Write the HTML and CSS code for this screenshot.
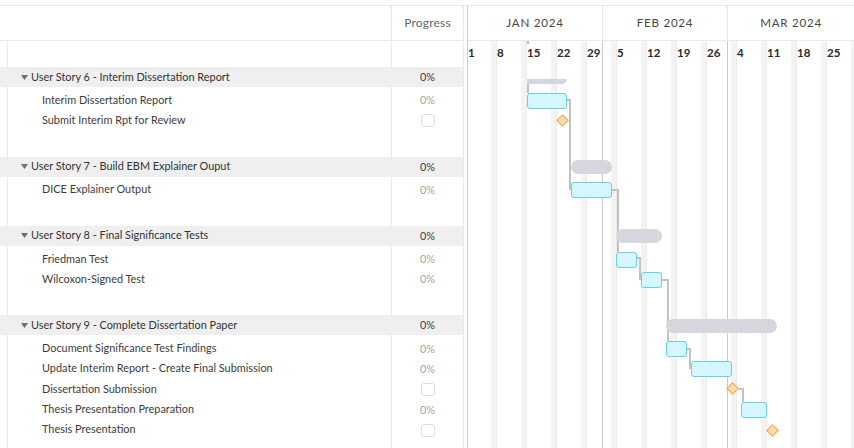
FILE: index.html
```html
<!DOCTYPE html>
<html lang="en">
<head>
<meta charset="utf-8">
<title>Gantt</title>
<link rel="stylesheet" href="styles.css">
</head>
<body>
<div class="app">
  <section class="tree">
    <div class="tree-head">
      <div class="head-name"></div>
      <div class="head-prog">Progress</div>
    </div>
    <div class="tree-body">
      <div class="block">
        <div class="row group"><div class="name"><svg class="caret" width="7" height="5" viewBox="0 0 7 5"><polygon points="0,0 7,0 3.5,5"/></svg>User Story 6 - Interim Dissertation Report</div><div class="prog">0%</div></div>
        <div class="row task"><div class="name">Interim Dissertation Report</div><div class="prog">0%</div></div>
        <div class="row task"><div class="name">Submit Interim Rpt for Review</div><div class="prog"><span class="check"></span></div></div>
      </div>
      <div class="block">
        <div class="row group"><div class="name"><svg class="caret" width="7" height="5" viewBox="0 0 7 5"><polygon points="0,0 7,0 3.5,5"/></svg>User Story 7 - Build EBM Explainer Ouput</div><div class="prog">0%</div></div>
        <div class="row task"><div class="name">DICE Explainer Output</div><div class="prog">0%</div></div>
      </div>
      <div class="block">
        <div class="row group"><div class="name"><svg class="caret" width="7" height="5" viewBox="0 0 7 5"><polygon points="0,0 7,0 3.5,5"/></svg>User Story 8 - Final Significance Tests</div><div class="prog">0%</div></div>
        <div class="row task"><div class="name">Friedman Test</div><div class="prog">0%</div></div>
        <div class="row task"><div class="name">Wilcoxon-Signed Test</div><div class="prog">0%</div></div>
      </div>
      <div class="block">
        <div class="row group"><div class="name"><svg class="caret" width="7" height="5" viewBox="0 0 7 5"><polygon points="0,0 7,0 3.5,5"/></svg>User Story 9 - Complete Dissertation Paper</div><div class="prog">0%</div></div>
        <div class="row task"><div class="name">Document Significance Test Findings</div><div class="prog">0%</div></div>
        <div class="row task"><div class="name">Update Interim Report - Create Final Submission</div><div class="prog">0%</div></div>
        <div class="row task"><div class="name">Dissertation Submission</div><div class="prog"><span class="check"></span></div></div>
        <div class="row task"><div class="name">Thesis Presentation Preparation</div><div class="prog">0%</div></div>
        <div class="row task"><div class="name">Thesis Presentation</div><div class="prog"><span class="check"></span></div></div>
      </div>
    </div>
  </section>
  <div class="splitter"></div>
  <section class="gantt">
    <div class="gantt-head">
      <div class="month jan">JAN 2024</div>
      <div class="month feb">FEB 2024</div>
      <div class="month mar">MAR 2024</div>
    </div>
    <div class="gantt-body">
      <div class="weekend" style="left:23px"></div>
      <div class="weekend" style="left:53px"></div>
      <div class="weekend" style="left:83px"></div>
      <div class="weekend" style="left:113px"></div>
      <div class="weekend" style="left:143px"></div>
      <div class="weekend" style="left:173px"></div>
      <div class="weekend" style="left:203px"></div>
      <div class="weekend" style="left:233px"></div>
      <div class="weekend" style="left:263px"></div>
      <div class="weekend" style="left:293px"></div>
      <div class="weekend" style="left:323px"></div>
      <div class="weekend" style="left:353px"></div>
      <div class="weekend" style="left:383px"></div>
      <div class="month-line" style="left:134px"></div>
      <div class="month-line" style="left:259px"></div>

      <div class="day" style="left:0px">1</div>
      <div class="day" style="left:29px">8</div>
      <div class="day" style="left:59px">15</div>
      <div class="day" style="left:89px">22</div>
      <div class="day" style="left:119px">29</div>
      <div class="day" style="left:149px">5</div>
      <div class="day" style="left:179px">12</div>
      <div class="day" style="left:209px">19</div>
      <div class="day" style="left:239px">26</div>
      <div class="day" style="left:269px">4</div>
      <div class="day" style="left:299px">11</div>
      <div class="day" style="left:329px">18</div>
      <div class="day" style="left:359px">25</div>

      <div class="link" style="left:59px;top:0;width:2px;height:3px"></div>
      <div class="link" style="left:59px;top:43px;width:2px;height:9px"></div>
      <div class="link" style="left:99px;top:58px;width:4px;height:2px"></div>
      <div class="link" style="left:101px;top:58px;width:2px;height:91px"></div>
      <div class="link" style="left:144px;top:148px;width:6px;height:2px"></div>
      <div class="link" style="left:149px;top:148px;width:2px;height:63px"></div>
      <div class="link" style="left:169px;top:216px;width:4px;height:2px"></div>
      <div class="link" style="left:171px;top:216px;width:2px;height:23px"></div>
      <div class="link" style="left:194px;top:238px;width:6px;height:2px"></div>
      <div class="link" style="left:199px;top:238px;width:2px;height:62px"></div>
      <div class="link" style="left:219px;top:307px;width:4px;height:2px"></div>
      <div class="link" style="left:221px;top:307px;width:2px;height:21px"></div>
      <div class="link" style="left:271px;top:347px;width:5px;height:2px"></div>
      <div class="link" style="left:274px;top:347px;width:2px;height:14px"></div>

      <div class="summary clipped" style="left:59px;top:38px;width:40px"></div>
      <div class="bar" style="left:59px;top:52px;width:40px"></div>
      <div class="milestone" style="left:90px;top:75px"></div>

      <div class="summary" style="left:103px;top:119px;width:41px"></div>
      <div class="bar" style="left:103px;top:141px;width:41px"></div>

      <div class="summary" style="left:148px;top:188px;width:46px"></div>
      <div class="bar" style="left:148px;top:211px;width:21px"></div>
      <div class="bar" style="left:173px;top:231px;width:21px"></div>

      <div class="summary" style="left:198px;top:278px;width:111px"></div>
      <div class="bar" style="left:198px;top:300px;width:21px"></div>
      <div class="bar" style="left:223px;top:320px;width:41px"></div>
      <div class="milestone" style="left:260px;top:343px"></div>
      <div class="bar" style="left:273px;top:361px;width:26px"></div>
      <div class="milestone" style="left:300px;top:385px"></div>
    </div>
  </section>
</div>
</body>
</html>
```

FILE: styles.css
```css
html, body {
  margin: 0;
  padding: 0;
  background: #fff;
}
body {
  font-family: Lato, "Liberation Sans", Arial, sans-serif;
  color: #333;
  overflow: hidden;
}
.app {
  margin-top: 5px;
  border-top: 1px solid #e9e9e9;
  display: flex;
  height: 442px;
  overflow: hidden;
}

/* ---------- tree ---------- */
.tree {
  width: 463px;
  flex: 0 0 463px;
  border-right: 1px solid #e9e9e9;
  display: flex;
  flex-direction: column;
}
.tree-head {
  height: 34px;
  border-bottom: 1px solid #e9e9e9;
  display: flex;
  flex: 0 0 34px;
}
.head-name {
  flex: 0 0 392px;
  box-sizing: border-box;
  border-right: 1px solid #e9e9e9;
}
.head-prog {
  flex: 1;
  text-align: center;
  line-height: 34px;
  font-size: 12px;
  letter-spacing: 0.2px;
  color: #666;
}
.tree-body {
  flex: 1;
  background:
    linear-gradient(#e9e9e9, #e9e9e9) 7px 0 / 1px 100% no-repeat,
    linear-gradient(#e9e9e9, #e9e9e9) 391px 0 / 1px 100% no-repeat;
}
.block {
  margin-top: 26px;
}
.row {
  display: flex;
  align-items: center;
  height: 20px;
  font-size: 10.9px;
  line-height: 14px;
}
.row.task {
  height: 20.3px;
}
.row .name {
  flex: 0 0 392px;
  box-sizing: border-box;
  white-space: nowrap;
  display: flex;
  align-items: center;
  margin-top: -1px;
}
.row .prog {
  flex: 1;
  display: flex;
  justify-content: center;
  align-items: center;
}
.group {
  background: #efefef;
  margin-bottom: 3px;
  color: #333;
}
.group .name {
  padding-left: 21px;
}
.caret {
  fill: #707070;
  margin-right: 3px;
  margin-top: 1px;
}
.group .prog {
  color: #3c3c3c;
}
.task .name {
  padding-left: 42px;
  color: #3c3c3c;
}
.task .prog {
  color: #a5a5a5;
}
.check {
  display: block;
  width: 14px;
  height: 13px;
  box-sizing: border-box;
  border: 1px solid #dedede;
  border-radius: 3px;
  background: #fff;
  margin-top: 1px;
}

.splitter {
  flex: 0 0 3px;
}

/* ---------- gantt ---------- */
.gantt {
  flex: 1;
  border-left: 1px solid #cdcdcd;
  display: flex;
  flex-direction: column;
  min-width: 0;
}
.gantt-head {
  flex: 0 0 34px;
  height: 34px;
  border-bottom: 1px solid #e9e9e9;
  display: flex;
}
.month {
  box-sizing: border-box;
  text-align: center;
  line-height: 34px;
  font-size: 11.6px;
  letter-spacing: 0.75px;
  color: #474747;
  white-space: nowrap;
}
.jan {
  flex: 0 0 135px;
  border-right: 1px solid #e6e6e6;
}
.feb {
  flex: 0 0 125px;
  border-right: 1px solid #e6e6e6;
}
.mar {
  flex: 1;
}
.gantt-body {
  flex: 1;
  position: relative;
  overflow: hidden;
}
.weekend {
  position: absolute;
  top: 0;
  bottom: 0;
  width: 6px;
  background: #f4f3f2;
  box-shadow: inset -1px 0 0 #ecebea;
}
.month-line {
  position: absolute;
  top: 0;
  bottom: 0;
  width: 1px;
  background: #cacaca;
}
.day {
  position: absolute;
  top: 5px;
  line-height: 14px;
  font-size: 11.5px;
  font-weight: 700;
  color: #2a2a2a;
}
.link {
  position: absolute;
  background: #c2c2c2;
}
.summary {
  position: absolute;
  height: 14px;
  border-radius: 7px;
  background: #d6d6de;
}
.summary.clipped {
  height: 5px;
  border-radius: 0 0 5px 2px;
}
.bar {
  position: absolute;
  height: 16px;
  box-sizing: border-box;
  border: 1px solid #68cfee;
  border-radius: 3px;
  background: #d4f6fd;
}
.milestone {
  position: absolute;
  width: 9px;
  height: 9px;
  box-sizing: border-box;
  border: 1px solid #f7a540;
  background: #fddcac;
  transform: rotate(45deg);
}
```
